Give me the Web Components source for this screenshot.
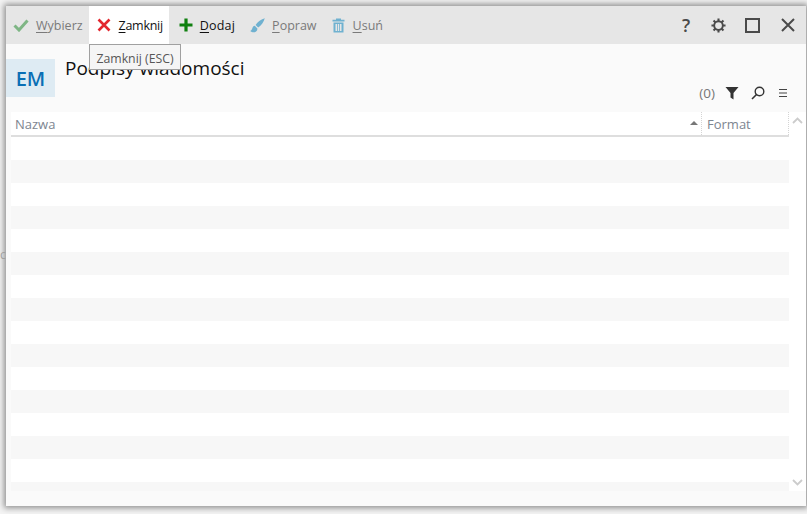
<!DOCTYPE html>
<html lang="pl">
<head>
<meta charset="utf-8">
<title>Podpisy wiadomości</title>
<style>
	html, body { margin: 0; height: 100%; background: #f4f4f4; overflow: hidden; }
	body { font-family: 'Open Sans', 'Noto Sans', sans-serif; }
</style>
</head>
<body>
<app-window>
	<tool-bar slot="toolbar">
		<tool-button key="W" rest="ybierz" muted style="--pl:7px;--gap:7px">
			<svg slot="icon" width="16" height="14" viewBox="0 0 16 14"><path d="M1.5 7.5 6 12 14.5 2.5" fill="none" stroke="#7fb685" stroke-width="3"/></svg>
		</tool-button>
		<tool-button key="Z" rest="amknij" active style="--ls:-.3px">
			<svg slot="icon" width="14" height="14" viewBox="0 0 14 14"><path d="M1.5 1.5 12.5 12.5M12.5 1.5 1.5 12.5" fill="none" stroke="#e3262e" stroke-width="2.6"/></svg>
		</tool-button>
		<tool-button key="D" rest="odaj" style="--pl:10px;--gap:7px;--ls:.2px">
			<svg slot="icon" width="14" height="14" viewBox="0 0 14 14"><path d="M7 0.5V13.5M0.5 7H13.5" fill="none" stroke="#108010" stroke-width="3.2"/></svg>
		</tool-button>
		<tool-button key="P" rest="opraw" muted style="--pl:9px;--gap:7px">
			<svg slot="icon" width="15" height="15" viewBox="0 0 15 15"><path d="M14.8 0.2C11.5 1 7.5 4 5.6 7L8.2 9.6C11.2 7.6 14 3.5 14.8 0.2ZM4.8 7.8C1.8 8.2 3 11.8 0.2 13 2.5 15.2 7.8 14.8 7.4 10.4Z" fill="#6fb1d0"/></svg>
		</tool-button>
		<tool-button key="U" rest="suń" muted style="--pl:9px">
			<svg slot="icon" width="13" height="15" viewBox="0 0 13 15"><path d="M4 1.8V0.6H9V1.8H12.5V3.4H0.5V1.8ZM1.5 4.4H11.5V14.5H1.5ZM3.5 6V13H5V6ZM5.8 6V13H7.2V6ZM8 6V13H9.5V6Z" fill="#6fb1d0" fill-rule="evenodd"/></svg>
		</tool-button>
		<span slot="tools" style="display:flex">
			<window-icon style="width:32px">
				<span style="font:600 18px 'Open Sans',sans-serif;color:#4a4a4a">?</span>
			</window-icon>
			<window-icon style="width:33px">
				<svg width="15" height="15" viewBox="0 0 16 16"><g fill="none" stroke="#4a4a4a"><circle cx="8" cy="8" r="4.6" stroke-width="2"/><path d="M8 0.5V3.2M8 12.8V15.5M0.5 8H3.2M12.8 8H15.5M2.7 2.7 4.6 4.6M11.4 11.4 13.3 13.3M13.3 2.7 11.4 4.6M4.6 11.4 2.7 13.3" stroke-width="2.2"/></g></svg>
			</window-icon>
			<window-icon style="width:35px">
				<svg width="15" height="15" viewBox="0 0 15 15"><rect x="1" y="1" width="13" height="13" fill="none" stroke="#4a4a4a" stroke-width="2"/></svg>
			</window-icon>
			<window-icon style="width:36px">
				<svg width="14" height="14" viewBox="0 0 14 14"><path d="M1 1 13 13M13 1 1 13" fill="none" stroke="#4a4a4a" stroke-width="2"/></svg>
			</window-icon>
		</span>
	</tool-bar>
	<page-head slot="head" badge="EM" heading="Podpisy wiadomości"></page-head>
	<data-grid slot="grid" rows="16"></data-grid>
	<tool-tip slot="tip">Zamknij (ESC)</tool-tip>
</app-window>

<script>
class AppWindow extends HTMLElement {
	constructor() {
		super();
		this.attachShadow({ mode: 'open' });
		this.shadowRoot.innerHTML = `
			<style>
				:host { display: block; height: 100%; box-sizing: border-box; padding: 6px 1px 8px 6px; }
				.frame { position: relative; height: 100%; display: flex; flex-direction: column; background: #fafafa; box-shadow: 0 0 6px 2px rgba(0,0,0,.42); }
				.gutter { position: absolute; left: -6px; top: 241px; width: 6px; overflow: hidden; font-size: 12px; line-height: 16px; color: #a0a0a0; }
			</style>
			<div class="frame">
				<span class="gutter">c</span>
				<slot name="toolbar"></slot>
				<slot name="head"></slot>
				<slot name="grid"></slot>
				<slot name="tip"></slot>
			</div>
		`;
	}
}

class ToolBar extends HTMLElement {
	constructor() {
		super();
		this.attachShadow({ mode: 'open' });
		this.shadowRoot.innerHTML = `
			<style>
				:host { display: flex; height: 38px; background: #e6e6e6; }
				.left { display: flex; flex: 1; }
				.right { display: flex; align-items: center; }
			</style>
			<div class="left"><slot></slot></div>
			<div class="right"><slot name="tools"></slot></div>
		`;
	}
}

class ToolButton extends HTMLElement {
	constructor() {
		super();
		this.attachShadow({ mode: 'open' });
	}

	connectedCallback() {
		const key = this.getAttribute('key');
		const rest = this.getAttribute('rest');
		this.shadowRoot.innerHTML = `
			<style>
				:host { display: flex; align-items: center; gap: var(--gap, 8px); padding: 0 6px 0 var(--pl, 8px); font-size: 12.5px; letter-spacing: var(--ls, 0); color: #111; }
				:host([muted]) { color: #7a7a7a; }
				:host([active]) { background: #fff; }
				.icon { display: flex; align-items: center; }
				u { text-underline-offset: 2px; }
			</style>
			<span class="icon"><slot name="icon"></slot></span>
			<span><u>${key}</u>${rest}</span>
		`;
	}
}

class WindowIcon extends HTMLElement {
	constructor() {
		super();
		this.attachShadow({ mode: 'open' });
		this.shadowRoot.innerHTML = `
			<style>
				:host { display: inline-flex; width: 34px; height: 38px; align-items: center; justify-content: center; vertical-align: top; }
			</style>
			<slot></slot>
		`;
	}
}

class PageHead extends HTMLElement {
	constructor() {
		super();
		this.attachShadow({ mode: 'open' });
	}

	connectedCallback() {
		this.shadowRoot.innerHTML = `
			<style>
				:host { display: flex; height: 68px; box-sizing: border-box; position: relative; }
				.badge { width: 49px; height: 38px; margin-top: 15px; display: flex; align-items: center; justify-content: center; background: #deebf3; color: #0a6fb5; font-size: 20px; font-weight: 600; }
				h1 { margin: 9px 0 0 10px; font-size: 19px; font-weight: 400; line-height: 30px; color: #111; }
				.actions { margin-left: auto; align-self: flex-end; display: flex; align-items: center; height: 24px; padding: 0 18px 0 0; margin-bottom: 7px; font-size: 13.5px; color: #767676; }
				svg { display: block; }
				.funnel { margin-left: 10px; }
				.search { margin-left: 12px; }
				.menu { margin-left: 13px; }
			</style>
			<div class="badge">${this.getAttribute('badge')}</div>
			<h1>${this.getAttribute('heading')}</h1>
			<div class="actions">
				<span>(0)</span>
				<svg class="funnel" width="14" height="14" viewBox="0 0 14 14"><path d="M0.5 1H13.5L8.5 7V13.5L5.5 11.5V7Z" fill="#333"/></svg>
				<svg class="search" width="14" height="14" viewBox="0 0 14 14"><circle cx="8.5" cy="5.5" r="4.3" fill="none" stroke="#333" stroke-width="1.4"/><path d="M5.5 8.5 1 13" stroke="#333" stroke-width="1.6"/></svg>
				<svg class="menu" width="10" height="10" viewBox="0 0 10 10"><path d="M1 1.5H9M1 5H9M1 8.5H9" stroke="#444" stroke-width="1.1"/></svg>
			</div>
		`;
	}
}

class DataGrid extends HTMLElement {
	constructor() {
		super();
		this.attachShadow({ mode: 'open' });
	}

	connectedCallback() {
		const count = Number(this.getAttribute('rows'));
		let rows = '';
		for (let i = 0; i < count; i++) rows += `<div class="row${i % 2 ? ' odd' : ''}"></div>`;

		this.shadowRoot.innerHTML = `
			<style>
				:host { display: flex; height: 379px; padding-left: 5px; }
				.table { flex: 1; min-width: 0; overflow: hidden; background: #fff; }
				.head { display: flex; height: 25px; box-sizing: border-box; border-bottom: 2px solid #dedede; font-size: 13px; color: #7d8590; line-height: 25px; }
				.name { flex: 1; padding-left: 4px; position: relative; }
				.name::after { content: ''; position: absolute; right: 3px; top: 9px; border: 4.5px solid transparent; border-top: 0; border-bottom: 4px solid #777; }
				.format { width: 81px; padding-left: 5px; border-left: 1px dotted #d4d4d4; border-right: 1px dotted #d4d4d4; }
				.row { height: 23px; }
				.row.odd { background: #f7f7f7; }
				.scroll { width: 17px; background: #fff; display: flex; flex-direction: column; justify-content: space-between; align-items: center; padding: 5px 0 5px; box-sizing: border-box; }
			</style>
			<div class="table">
				<div class="head">
					<div class="name">Nazwa</div>
					<div class="format">Format</div>
				</div>
				${rows}
			</div>
			<div class="scroll">
				<svg width="11" height="7" viewBox="0 0 11 7"><path d="M1 6 5.5 1.5 10 6" fill="none" stroke="#ccc" stroke-width="1.8"/></svg>
				<svg width="11" height="7" viewBox="0 0 11 7"><path d="M1 1 5.5 5.5 10 1" fill="none" stroke="#ccc" stroke-width="1.8"/></svg>
			</div>
		`;
	}
}

class ToolTip extends HTMLElement {
	constructor() {
		super();
		this.attachShadow({ mode: 'open' });
		this.shadowRoot.innerHTML = `
			<style>
				:host { position: absolute; left: 83px; top: 38px; box-sizing: border-box; width: 92px; height: 26px; border: 1px solid #a0a0a0; background: #f5f5f5; color: #575757; font-size: 12.3px; line-height: 27px; text-align: center; white-space: nowrap; }
			</style>
			<slot></slot>
		`;
	}
}

customElements.define('app-window', AppWindow);
customElements.define('tool-bar', ToolBar);
customElements.define('tool-button', ToolButton);
customElements.define('window-icon', WindowIcon);
customElements.define('page-head', PageHead);
customElements.define('data-grid', DataGrid);
customElements.define('tool-tip', ToolTip);
</script>
</body>
</html>
